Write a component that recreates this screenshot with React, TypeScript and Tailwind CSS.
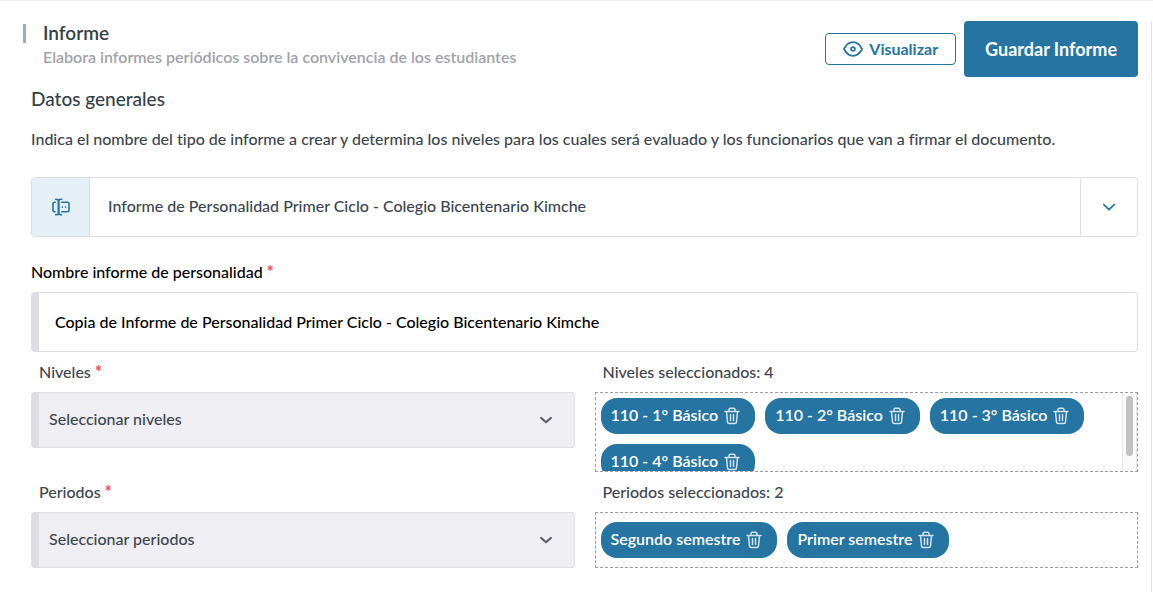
import { useState } from "react";
import type { ReactNode } from "react";

type Option = { id: string; label: string };

const REPORT_TYPES = [
  "Informe de Personalidad Primer Ciclo - Colegio Bicentenario Kimche",
];

const LEVELS: Option[] = [
  { id: "n1", label: "110 - 1° Básico" },
  { id: "n2", label: "110 - 2° Básico" },
  { id: "n3", label: "110 - 3° Básico" },
  { id: "n4", label: "110 - 4° Básico" },
];

const PERIODS: Option[] = [
  { id: "p2", label: "Segundo semestre" },
  { id: "p1", label: "Primer semestre" },
];

export default function App() {
  const [name, setName] = useState(
    "Copia de Informe de Personalidad Primer Ciclo - Colegio Bicentenario Kimche",
  );
  const [levels, setLevels] = useState(LEVELS);
  const [periods, setPeriods] = useState(PERIODS);

  return (
    <div className="min-h-screen border-t border-[#ebebf1] bg-white pt-5 font-[Lato,'Open_Sans',sans-serif] text-base font-medium text-[#3c4650] [font-variant-ligatures:none]">
      <main className="mr-px min-h-[calc(100vh-21px)] border-r border-[#e4e4e8] pr-[13px] pl-[31px]">
        <header className="-ml-2 flex items-start justify-between">
          <div className="flex items-start">
            <span className="mt-[3px] h-[19px] w-[3px] bg-[#8ab4cf]" />
            <div className="ml-[17px] pt-0.5">
              <h1 className="text-[19px] leading-5 font-semibold text-[#343f4a]">
                Informe
              </h1>
              <p className="mt-1 leading-5 font-semibold text-[#a0a3a9]">
                Elabora informes periódicos sobre la convivencia de los
                estudiantes
              </p>
            </div>
          </div>
          <div className="flex items-center gap-2">
            <button
              className="flex h-8 items-center gap-1.5 rounded-[4px] border border-[#2574a2] px-[17px] font-bold text-[#2574a2]"
              type="button"
            >
              <EyeIcon />
              Visualizar
            </button>
            <button
              className="h-14 rounded-[4px] bg-[#2574a2] px-[21px] text-lg font-bold text-white"
              type="button"
            >
              Guardar Informe
            </button>
          </div>
        </header>

        <h2 className="mt-2.5 text-[19px] leading-6 text-[#343f4a]">
          Datos generales
        </h2>
        <p className="mt-4 leading-6">
          Indica el nombre del tipo de informe a crear y determina los niveles
          para los cuales será evaluado y los funcionarios que van a firmar el
          documento.
        </p>

        <div className="mt-[26px] flex h-[60px] overflow-hidden rounded-[4px] border border-[#dcdee6]">
          <span className="flex w-[58px] items-center justify-center border-r border-[#dcdee6] bg-[#e4eff6] text-[#2574a2]">
            <FieldIcon />
          </span>
          <select
            aria-label="Tipo de informe"
            className="min-w-0 flex-1 appearance-none px-[18px] pb-0.5 outline-none"
          >
            {REPORT_TYPES.map((type) => (
              <option key={type}>{type}</option>
            ))}
          </select>
          <span className="my-px flex w-[57px] items-center justify-center border-l border-[#dcdee6] text-[#2574a2]">
            <ChevronIcon thin />
          </span>
        </div>

        <label
          className="mt-[23px] mb-2 block leading-6 text-black"
          htmlFor="report-name"
        >
          Nombre informe de personalidad <Required />
        </label>
        <input
          className="block h-[60px] w-full rounded-[4px] border border-l-8 border-[#dcdee6] px-4 pb-0.5 text-black outline-none"
          id="report-name"
          onChange={(event) => setName(event.target.value)}
          value={name}
        />

        <SelectionRow
          id="levels"
          label="Niveles"
          placeholder="Seleccionar niveles"
          summary={`Niveles seleccionados: ${levels.length}`}
        >
          <div className="flex h-20 border border-dashed border-[#9a9da3]">
            <div className="flex flex-1 flex-wrap gap-2.5 overflow-y-auto p-[5px] [scrollbar-width:none]">
              <Chips items={levels} onChange={setLevels} />
            </div>
            <div className="w-[15px] border-x border-[#e8e8e8] bg-[#fafafa] px-[3px] pt-[3px]">
              <div className="h-[60px] rounded-full bg-[#c1c1c1]" />
            </div>
          </div>
        </SelectionRow>

        <SelectionRow
          id="periods"
          label="Periodos"
          placeholder="Seleccionar periodos"
          summary={`Periodos seleccionados: ${periods.length}`}
        >
          <div className="flex min-h-14 flex-wrap items-center gap-2.5 border border-dashed border-[#9a9da3] px-[5px]">
            <Chips items={periods} onChange={setPeriods} />
          </div>
        </SelectionRow>
      </main>
    </div>
  );
}

function SelectionRow(props: {
  id: string;
  label: string;
  placeholder: string;
  summary: string;
  children: ReactNode;
}) {
  return (
    <section className="grid grid-cols-2 gap-5">
      <div>
        <label className="block px-2 leading-10" htmlFor={props.id}>
          {props.label} <Required />
        </label>
        <div className="flex h-14 items-center rounded-[4px] border border-l-8 border-[#dcdee6] bg-[#efeef3] pr-5">
          <select
            className="h-full min-w-0 flex-1 appearance-none px-2.5 pb-0.5 outline-none"
            id={props.id}
          >
            <option>{props.placeholder}</option>
          </select>
          <span className="text-[#5a6068]">
            <ChevronIcon />
          </span>
        </div>
      </div>
      <div>
        <p className="px-2 leading-10">{props.summary}</p>
        {props.children}
      </div>
    </section>
  );
}

function Chips({
  items,
  onChange,
}: {
  items: Option[];
  onChange: (items: Option[]) => void;
}) {
  return items.map((item) => (
    <span
      className="flex h-9 shrink-0 items-center gap-1.5 rounded-2xl bg-[#2574a2] pr-[15px] pl-2.5 font-semibold text-white"
      key={item.id}
    >
      <span className="pb-0.5">{item.label}</span>
      <button
        aria-label={`Quitar ${item.label}`}
        className="text-[#d3e3ed]"
        onClick={() => onChange(items.filter(({ id }) => id !== item.id))}
        type="button"
      >
        <TrashIcon />
      </button>
    </span>
  ));
}

function Required() {
  return <span className="font-black text-[#f4514f]">*</span>;
}

function ChevronIcon({ thin = false }: { thin?: boolean }) {
  return (
    <svg
      className="pointer-events-none"
      fill="none"
      height="16"
      stroke="currentColor"
      strokeLinecap="round"
      strokeLinejoin="round"
      strokeWidth={thin ? 1.7 : 2.2}
      viewBox="0 0 16 16"
      width="16"
    >
      <path d={thin ? "M2.8 5.6 8 10.7l5.2-5.1" : "M3.2 6 8 10.3 12.8 6"} />
    </svg>
  );
}

function EyeIcon() {
  return (
    <svg
      fill="none"
      height="16"
      stroke="currentColor"
      strokeLinejoin="round"
      strokeWidth="1.8"
      viewBox="0 0 20 16"
      width="20"
    >
      <path d="M.9 8C3.200 3.700 6.300 1.200 10 1.200S16.800 3.700 19.100 8C16.800 12.300 13.700 14.800 10 14.800S3.200 12.300.9 8Z" />
      <circle cx="10" cy="8" r="1.900" />
    </svg>
  );
}

function FieldIcon() {
  return (
    <svg
      fill="none"
      height="18"
      stroke="currentColor"
      strokeLinecap="round"
      strokeLinejoin="round"
      strokeWidth="1.6"
      viewBox="0 0 18 18"
      width="18"
    >
      <path d="M3.200 4.300H2.500C1.500 4.300 1 4.900 1 5.800v6.400c0 .9.5 1.500 1.500 1.500h.7" />
      <path d="M3.600 1.200c1.800 0 3 .4 3 1.600 0-1.200 1.200-1.600 3-1.600M3.600 16.800c1.800 0 3-.4 3-1.600 0 1.200 1.200 1.600 3 1.600" />
      <path d="M6.600 2.700v12.600" strokeWidth="2.200" />
      <path d="M9.700 4.300h5.800c.9 0 1.500.6 1.500 1.500v6.400c0 .9-.6 1.500-1.500 1.500H9.700" />
      <path d="M10.300 9h.1M13.500 9h.1" strokeWidth="1.700" />
    </svg>
  );
}

function TrashIcon() {
  return (
    <svg
      className="block"
      fill="none"
      height="18"
      stroke="currentColor"
      strokeLinecap="round"
      strokeLinejoin="round"
      strokeWidth="1.5"
      viewBox="0 0 16 18"
      width="16"
    >
      <path d="M1 4.500h14M2.500 4.700l1 10.300c.1 1 .7 1.500 1.600 1.500h5.800c.9 0 1.500-.5 1.600-1.500l1-10.300M5 4.300V2.700C5 1.800 5.500 1.300 6.300 1.300h3.400c.8 0 1.300.5 1.300 1.400v1.600M6.500 7.500v6M9.500 7.500v6" />
    </svg>
  );
}
